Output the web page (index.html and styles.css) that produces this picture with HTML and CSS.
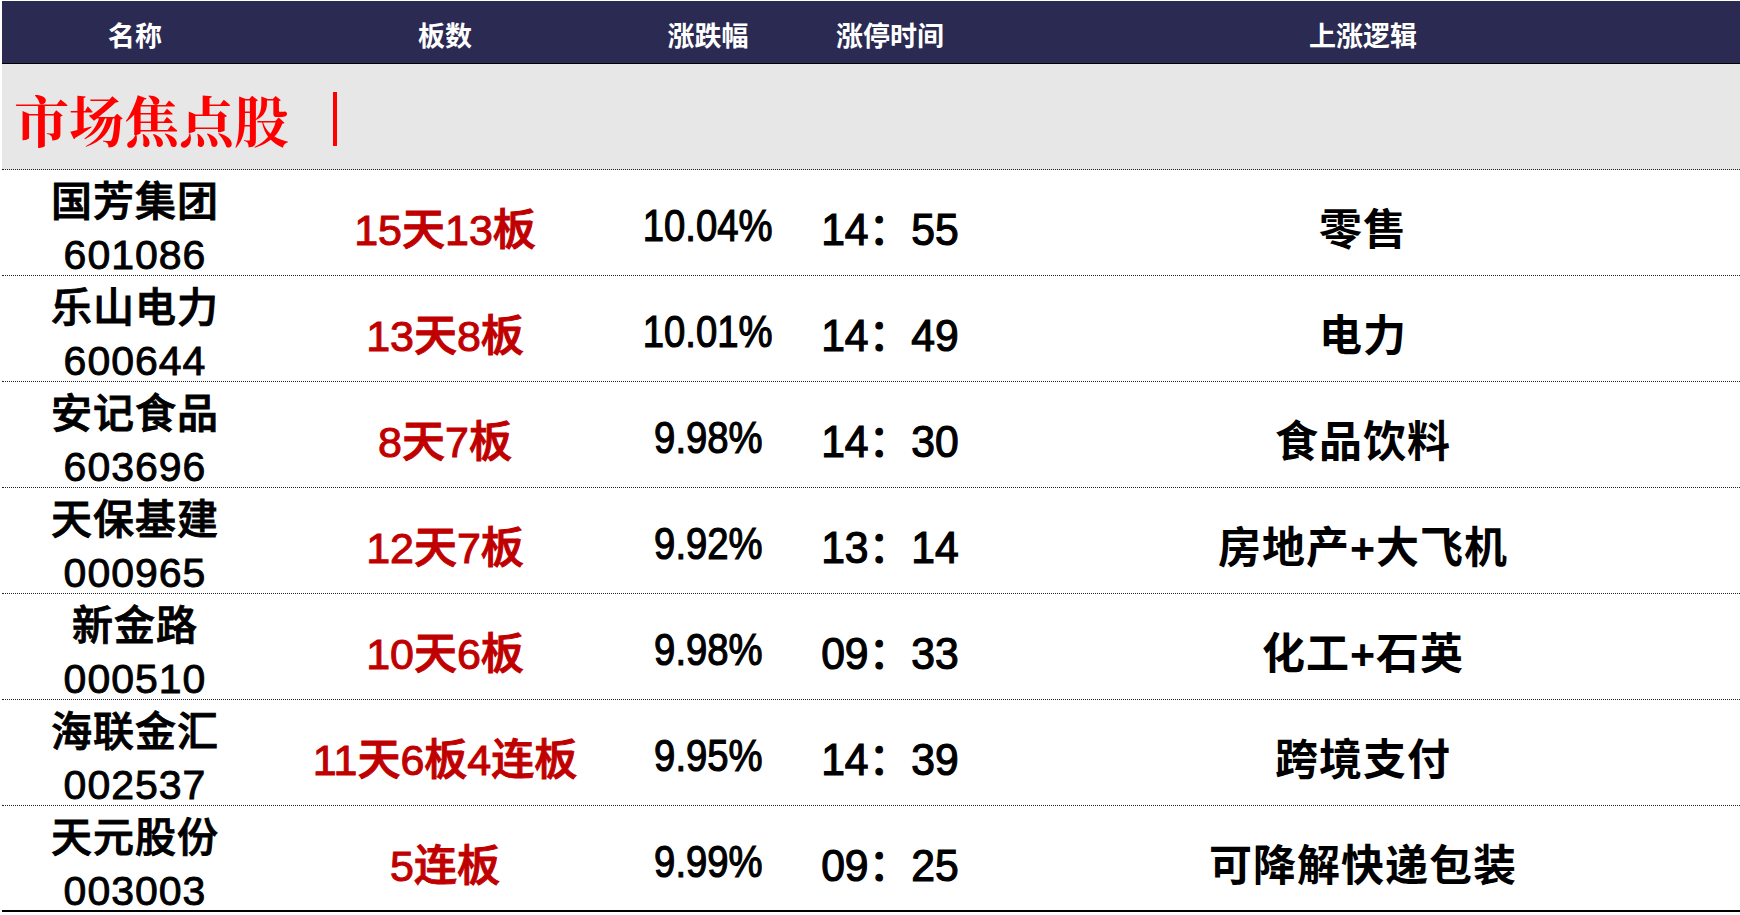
FILE: index.html
```html
<!DOCTYPE html>
<html lang="zh-CN">
<head>
<meta charset="utf-8">
<title>市场焦点股</title>
<link rel="stylesheet" href="styles.css">
</head>
<body>
<div class="sheet">
  <div class="row head">
    <div class="c">名称</div>
    <div class="c">板数</div>
    <div class="c">涨跌幅</div>
    <div class="c">涨停时间</div>
    <div class="c">上涨逻辑</div>
  </div>
  <div class="section">
    <span class="title">市场焦点股</span>
    <span class="bar"></span>
  </div>
  <div class="row data">
    <div class="c name">国芳集团<br>601086</div>
    <div class="c board">15天13板</div>
    <div class="c pct"><span class="nar">10.04%</span></div>
    <div class="c time"><span class="nar">14：55</span></div>
    <div class="c logic">零售</div>
  </div>
  <div class="row data">
    <div class="c name">乐山电力<br>600644</div>
    <div class="c board">13天8板</div>
    <div class="c pct"><span class="nar">10.01%</span></div>
    <div class="c time"><span class="nar">14：49</span></div>
    <div class="c logic">电力</div>
  </div>
  <div class="row data">
    <div class="c name">安记食品<br>603696</div>
    <div class="c board">8天7板</div>
    <div class="c pct"><span class="nar">9.98%</span></div>
    <div class="c time"><span class="nar">14：30</span></div>
    <div class="c logic">食品饮料</div>
  </div>
  <div class="row data">
    <div class="c name">天保基建<br>000965</div>
    <div class="c board">12天7板</div>
    <div class="c pct"><span class="nar">9.92%</span></div>
    <div class="c time"><span class="nar">13：14</span></div>
    <div class="c logic">房地产+大飞机</div>
  </div>
  <div class="row data">
    <div class="c name">新金路<br>000510</div>
    <div class="c board">10天6板</div>
    <div class="c pct"><span class="nar">9.98%</span></div>
    <div class="c time"><span class="nar">09：33</span></div>
    <div class="c logic">化工+石英</div>
  </div>
  <div class="row data">
    <div class="c name">海联金汇<br>002537</div>
    <div class="c board">11天6板4连板</div>
    <div class="c pct"><span class="nar">9.95%</span></div>
    <div class="c time"><span class="nar">14：39</span></div>
    <div class="c logic">跨境支付</div>
  </div>
  <div class="row data last">
    <div class="c name">天元股份<br>003003</div>
    <div class="c board">5连板</div>
    <div class="c pct"><span class="nar">9.99%</span></div>
    <div class="c time"><span class="nar">09：25</span></div>
    <div class="c logic">可降解快递包装</div>
  </div>
</div>
</body>
</html>
```

FILE: styles.css
```css
* { box-sizing: border-box; }
html, body {
  margin: 0;
  padding: 0;
  background: #ffffff;
}
body {
  font-family: "Liberation Sans", "Noto Sans CJK SC", sans-serif;
  color: #000;
}
.sheet {
  width: 1740px;
  padding: 1px 0 0 2px;
}
.row {
  display: grid;
  grid-template-columns: 266px 354px 172px 192px 1fr;
}
.c {
  display: flex;
  align-items: center;
  justify-content: center;
  text-align: center;
}
.head {
  height: 63px;
  background: #2b2a52;
  border-bottom: 1px solid #000;
  color: #fff;
  font-family: "Noto Sans CJK SC", sans-serif;
  font-size: 27px;
  font-weight: 700;
}
.head .c { padding-top: 4px; }
.section {
  height: 106px;
  background: #e7e7e7;
  border-bottom: 1px dotted #222;
  display: flex;
  align-items: center;
  gap: 44px;
  padding: 4px 0 0 12px;
}
.title {
  font-family: "Noto Serif CJK SC", "Source Han Serif SC", "AR PL UMing CN", "Liberation Serif", "Noto Sans CJK SC", serif;
  font-size: 55px;
  font-weight: 700;
  color: #ff0000;
  line-height: 1;
}
.bar {
  display: block;
  width: 4px;
  height: 54px;
  background: #ff0000;
}
.data {
  height: 106px;
  border-bottom: 1px dotted #222;
}
.data.last {
  border-bottom: 2px solid #000;
}
.data .c { padding-top: 0; }
.data .c.name { padding-top: 6px; }
.name {
  font-size: 41px;
  line-height: 53px;
  font-weight: 500;
  letter-spacing: 1px;
  -webkit-text-stroke: 0.9px #000;
}
.board {
  font-size: 43px;
  font-weight: 500;
  color: #c00000;
  -webkit-text-stroke: 1px #c00000;
}
.nar {
  display: inline-block;
  transform: scaleX(0.87);
  white-space: nowrap;
}
.time .nar { transform: scaleX(0.97); }
.pct {
  font-size: 44px;
  font-weight: 400;
  -webkit-text-stroke: 1.2px #000;
}
.time {
  font-size: 44px;
  font-weight: 400;
  -webkit-text-stroke: 1.2px #000;
}
.logic {
  font-size: 43px;
  font-weight: 700;
  letter-spacing: 1px;
}
```
